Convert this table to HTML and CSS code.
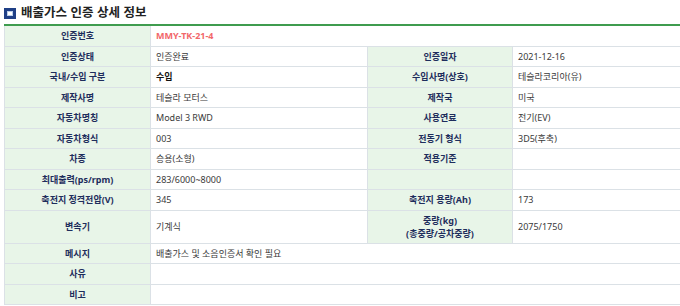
FILE: index.html
```html
<!DOCTYPE html>
<html lang="ko">
<head>
<meta charset="utf-8">
<link rel="stylesheet" href="styles.css">
</head>
<body>
<div class="page">
  <h2 class="title"><span class="title-icon"></span>배출가스 인증 상세 정보</h2>
  <table class="info">
    <colgroup>
      <col class="c-label"><col class="c-value"><col class="c-label2"><col class="c-value2">
    </colgroup>
    <tbody>
      <tr><th>인증번호</th><td colspan="3" class="cert">MMY-TK-21-4</td></tr>
      <tr><th>인증상태</th><td>인증완료</td><th>인증일자</th><td>2021-12-16</td></tr>
      <tr><th>국내/수입 구분</th><td class="strong">수입</td><th>수입사명(상호)</th><td>테슬라코리아(유)</td></tr>
      <tr><th>제작사명</th><td>테슬라 모터스</td><th>제작국</th><td>미국</td></tr>
      <tr><th>자동차명칭</th><td>Model 3 RWD</td><th>사용연료</th><td>전기(EV)</td></tr>
      <tr><th>자동차형식</th><td>003</td><th>전동기 형식</th><td>3D5(후축)</td></tr>
      <tr><th>차종</th><td>승용(소형)</td><th>적용기준</th><td></td></tr>
      <tr><th>최대출력(ps/rpm)</th><td>283/6000~8000</td><th></th><td></td></tr>
      <tr><th>축전지 정격전압(V)</th><td>345</td><th>축전지 용량(Ah)</th><td>173</td></tr>
      <tr class="tall"><th>변속기</th><td>기계식</td><th>중량(kg)<br>(총중량/공차중량)</th><td>2075/1750</td></tr>
      <tr><th>메시지</th><td colspan="3">배출가스 및 소음인증서 확인 필요</td></tr>
      <tr><th>사유</th><td colspan="3"></td></tr>
      <tr><th>비고</th><td colspan="3"></td></tr>
    </tbody>
  </table>
</div>
</body>
</html>
```

FILE: styles.css
```css
html, body {
  margin: 0;
  padding: 0;
  background: #ffffff;
}
.page {
  padding: 4px 0 0 4px;
  font-family: "Noto Sans", "Noto Sans CJK KR", sans-serif;
}
.title {
  display: flex;
  align-items: center;
  gap: 5px;
  margin: 0;
  height: 16px;
  font-family: "Noto Sans CJK KR", sans-serif;
  font-size: 12.5px;
  font-weight: 700;
  color: #222222;
  line-height: 16px;
}
.title-icon {
  display: block;
  width: 6px;
  height: 5px;
  margin-top: 2px;
  border: 3px solid #1f3f86;
  border-left-width: 3px;
  background: #ffffff;
  box-shadow: inset 0 0 0 1px #b9cdea;
}
.info {
  margin-top: 4px;
  width: 676px;
  border-collapse: collapse;
  table-layout: fixed;
}
.c-label { width: 146px; }
.c-value { width: 217px; }
.c-label2 { width: 145px; }
.c-value2 { width: 168px; }
.info th, .info td {
  height: 19.5px;
  padding: 0 5px;
  border: 1px solid #dbe1e6;
  font-size: 9px;
  line-height: 13px;
  vertical-align: middle;
}
.info tr:first-child th, .info tr:first-child td {
  border-top: 2px solid #3f9c4f;
}
.info th {
  background: #e8f5e8;
  color: #1e2d5c;
  font-weight: 700;
  text-align: center;
}
.info td {
  background: #ffffff;
  color: #3a3a3a;
  text-align: left;
}
.info td.cert {
  color: #f2676a;
  font-weight: 700;
}
.info td.strong {
  color: #111111;
  font-weight: 700;
}
.info tr.tall th, .info tr.tall td {
  height: 32px;
}
```
